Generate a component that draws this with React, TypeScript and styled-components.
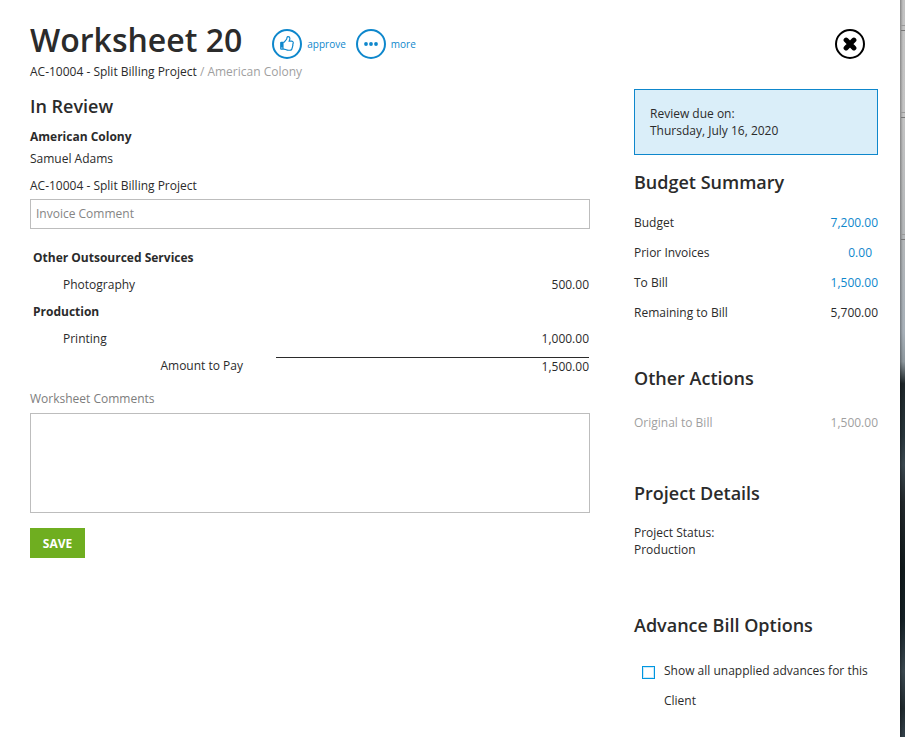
import React from 'react';
import styled, { createGlobalStyle, css } from 'styled-components';

const ink = '#2b2b2b';
const blue = '#0e87cc';
const muted = '#9f9f9f';

const GlobalStyle = createGlobalStyle`
  * { box-sizing: border-box; }
  body {
    margin: 0;
    background: #fff;
    color: ${ink};
    font: 12px/17px "Open Sans", "Noto Sans", sans-serif;
  }
  button, input, textarea { font: inherit; color: inherit; }
`;

const Screen = styled.div`
  display: grid;
  grid-template-columns: minmax(0, 1fr) 5px;
  min-height: 100vh;
`;

const Backdrop = styled.div`
  background: linear-gradient(90deg, rgba(0, 0, 0, 0.3), transparent 3px),
    linear-gradient(#c2c2c2 0, #c4c4c4 15%, #b4b7b9 32%, #a7b0b8 45%, #8d979d 49%, #1d2528 52%, #27343a 59%,
      #3a474f 63%, #22282b 68%, #10191b 77%, #142025 84%, #3a474f 91%, #1f292d 96%, #34414a);
  display: flex;
  flex-direction: column;
  align-items: flex-end;
  padding-top: 25px;
`;

const BackdropMark = styled.span<{ $gap: number }>`
  width: 4px;
  height: 6px;
  margin-bottom: ${(p) => p.$gap}px;
  border-bottom: 1px solid #777;
  border-top: 1px solid #999;
`;

const Panel = styled.div`
  padding: 21px 22px 22px 30px;
`;

const Header = styled.header`
  display: flex;
  align-items: flex-start;
  gap: 30px;
`;

const Title = styled.h1`
  margin: 0;
  font-size: 32px;
  line-height: 38px;
  font-weight: 600;
`;

const Actions = styled.div`
  display: flex;
  flex: 1;
  gap: 10px;
  padding-top: 8px;
`;

const ActionButton = styled.button`
  display: flex;
  align-items: center;
  gap: 5px;
  padding: 0;
  border: 0;
  background: none;
  color: ${blue};
  font-size: 10px;
  cursor: pointer;
`;

const Ring = styled.span`
  display: flex;
  align-items: center;
  justify-content: center;
  width: 30px;
  height: 30px;
  border: 2px solid currentColor;
  border-radius: 50%;
`;

const CloseButton = styled.button`
  margin: 8px 13px 0 0;
  padding: 0;
  border: 0;
  background: none;
  color: #000;
  cursor: pointer;
`;

const Crumbs = styled.nav`
  margin-top: 4px;
`;

const Crumb = styled.span<{ $muted?: boolean }>`
  color: ${(p) => (p.$muted ? muted : ink)};
`;

const Columns = styled.div`
  display: grid;
  grid-template-columns: minmax(0, 1fr) 244px;
  gap: 44px;
  padding-top: 9px;
`;

const Heading = styled.h2`
  margin: 0;
  font-size: 18px;
  line-height: 24px;
  font-weight: 600;
`;

const Client = styled.p<{ $strong?: boolean }>`
  margin: ${(p) => (p.$strong ? 10 : 5)}px 0 0;
  font-weight: ${(p) => (p.$strong ? 700 : 400)};
`;

const fieldBox = css`
  display: block;
  width: 100%;
  border: 1px solid #bdbdbd;
  border-radius: 0;
  background: #fff;
  padding: 0 5px;
`;

const Field = styled.label`
  display: block;
  margin-top: 10px;
`;

const CommentInput = styled.input`
  ${fieldBox}
  height: 30px;
  margin-top: 5px;
  padding-bottom: 2px;
  &::placeholder { color: #858585; opacity: 1; }
`;

const CommentArea = styled.textarea`
  ${fieldBox}
  height: 100px;
  margin-top: 6px;
  resize: none;
`;

const FieldLabel = styled.span`
  color: #7d7d7d;
`;

const Lines = styled.table`
  width: 100%;
  margin: 15px 0 11px;
  border-collapse: collapse;
`;

const GroupCell = styled.th`
  height: 27px;
  padding: 0 3px;
  text-align: left;
  font-weight: 700;
`;

const ItemCell = styled.th`
  width: 246px;
  height: 27px;
  padding: 0 0 0 33px;
  text-align: left;
  font-weight: 400;
`;

const TotalCell = styled(ItemCell)`
  padding: 0 33px 0 0;
  text-align: right;
`;

const AmountCell = styled.td<{ $total?: boolean }>`
  padding: 0 1px 0 0;
  text-align: right;
  ${(p) => p.$total && 'vertical-align: bottom;'}
`;

const TotalAmount = styled.div`
  height: 22px;
  border-top: 1px solid ${ink};
`;

const SaveButton = styled.button`
  width: 55px;
  height: 30px;
  margin-top: 15px;
  padding: 0;
  border: 0;
  background: #6fae20;
  color: #fff;
  font-weight: 700;
  cursor: pointer;
`;

const Notice = styled.div`
  padding: 15px;
  min-height: 66px;
  border: 1px solid ${blue};
  background: #daeef9;
`;

const Section = styled.section<{ $gap: number }>`
  margin-top: ${(p) => p.$gap}px;
`;

const Figures = styled.dl<{ $loose?: boolean }>`
  margin: ${(p) => (p.$loose ? 18 : 14)}px 0 0;
`;

const Figure = styled.div<{ $muted?: boolean }>`
  display: flex;
  justify-content: space-between;
  line-height: 30px;
  color: ${(p) => (p.$muted ? muted : ink)};
`;

const FigureValue = styled.dd`
  margin: 0;
`;

const ValueLink = styled.a<{ $inset?: boolean }>`
  color: ${blue};
  text-decoration: none;
  padding-right: ${(p) => (p.$inset ? 6 : 0)}px;
`;

const Status = styled.p`
  margin: 19px 0 0;
`;

const Option = styled.label`
  display: flex;
  align-items: flex-start;
  gap: 9px;
  margin-top: 19px;
  padding-left: 8px;
  line-height: 30px;
`;

const Check = styled.input`
  appearance: none;
  flex: none;
  width: 13px;
  height: 13px;
  margin: 10px 0 0;
  border: 1px solid #0096e0;
  box-shadow: inset 0 0 0 1px rgba(0, 150, 224, 0.2);
  background: #fff;
  &:checked { background: ${blue}; }
`;

const ThumbIcon = () => (
  <svg width="14" height="16" viewBox="0 0 1536 1792" fill="currentColor" aria-hidden="true">
    <path d="M256 1344q0-26-19-45t-45-19-45 19-19 45 19 45 45 19 45-19 19-45zm1152-576q0-51-39-89.5t-89-38.5h-352q0-58 48-159.5t48-160.5q0-98-32-145t-128-47q-26 26-38 85t-30.5 125.5-59.5 109.5q-22 23-77 91-4 5-23 30t-31.5 41-34.5 42.5-40 44-38.5 35.5-40 27-35.5 9h-32v640h32q13 0 31.5 3t33 6.5 38 11 35 11.5 35.5 12.5 29 10.5q211 73 342 73h121q192 0 192-167 0-26-5-56 30-16 47.5-52.5t17.5-73.5-18-69q53-50 53-119 0-25-10-55.5t-25-47.5q32-1 53.5-47t21.5-81zm128-1q0 89-49 163 9 33 9 69 0 77-38 144 3 21 3 43 0 101-60 178 1 139-85 219.5t-227 80.5h-129q-96 0-189.5-22.5t-216.5-65.5q-116-40-138-40h-288q-53 0-90.5-37.5t-37.5-90.5v-640q0-53 37.5-90.5t90.5-37.5h274q36-24 137-155 58-75 107-128 24-25 35.5-85.5t30.5-126.5 62-108q39-37 90-37 84 0 151 32.5t102 101.5 35 186q0 93-48 192h176q104 0 180 76t76 179z" />
  </svg>
);

const DotsIcon = () => (
  <svg width="14" height="4" viewBox="0 0 14 4" fill="currentColor" aria-hidden="true">
    <circle cx="2" cy="2" r="1.9" />
    <circle cx="7" cy="2" r="1.9" />
    <circle cx="12" cy="2" r="1.9" />
  </svg>
);

const CrossIcon = () => (
  <svg width="14" height="14" viewBox="0 0 14 14" aria-hidden="true">
    <path d="M3.1 3.1l7.8 7.8M10.9 3.1l-7.8 7.8" stroke="currentColor" strokeWidth="5" strokeLinecap="round" />
  </svg>
);

const figures = [
  { label: 'Budget', value: '7,200.00', link: true },
  { label: 'Prior Invoices', value: '0.00', link: true, inset: true },
  { label: 'To Bill', value: '1,500.00', link: true },
  { label: 'Remaining to Bill', value: '5,700.00' },
];

const groups = [
  { name: 'Other Outsourced Services', item: 'Photography', amount: '500.00' },
  { name: 'Production', item: 'Printing', amount: '1,000.00' },
];

export default function App() {
  return (
    <Screen>
      <GlobalStyle />
      <Panel>
        <Header>
          <Title>Worksheet 20</Title>
          <Actions>
            <ActionButton type="button"><Ring><ThumbIcon /></Ring>approve</ActionButton>
            <ActionButton type="button"><Ring><DotsIcon /></Ring>more</ActionButton>
          </Actions>
          <CloseButton type="button" aria-label="Close"><Ring><CrossIcon /></Ring></CloseButton>
        </Header>
        <Crumbs>
          <Crumb>AC-10004 - Split Billing Project</Crumb>
          <Crumb $muted> / American Colony</Crumb>
        </Crumbs>
        <Columns>
          <main>
            <Section $gap={5}>
              <Heading>In Review</Heading>
              <Client $strong>American Colony</Client>
              <Client>Samuel Adams</Client>
              <Field>
                AC-10004 - Split Billing Project
                <CommentInput placeholder="Invoice Comment" />
              </Field>
            </Section>
            <Lines>
              <tbody>
                {groups.map((g) => (
                  <React.Fragment key={g.name}>
                    <tr><GroupCell colSpan={2}>{g.name}</GroupCell></tr>
                    <tr><ItemCell scope="row">{g.item}</ItemCell><AmountCell>{g.amount}</AmountCell></tr>
                  </React.Fragment>
                ))}
                <tr>
                  <TotalCell scope="row">Amount to Pay</TotalCell>
                  <AmountCell $total><TotalAmount>1,500.00</TotalAmount></AmountCell>
                </tr>
              </tbody>
            </Lines>
            <Field>
              <FieldLabel>Worksheet Comments</FieldLabel>
              <CommentArea />
            </Field>
            <SaveButton type="button">SAVE</SaveButton>
          </main>
          <aside>
            <Notice>Review due on:<br />Thursday, July 16, 2020</Notice>
            <Section $gap={15}>
              <Heading>Budget Summary</Heading>
              <Figures>
                {figures.map((f) => (
                  <Figure key={f.label}>
                    <dt>{f.label}</dt>
                    <FigureValue>
                      {f.link ? <ValueLink href="#" $inset={f.inset}>{f.value}</ValueLink> : f.value}
                    </FigureValue>
                  </Figure>
                ))}
              </Figures>
            </Section>
            <Section $gap={38}>
              <Heading>Other Actions</Heading>
              <Figures $loose>
                <Figure $muted><dt>Original to Bill</dt><FigureValue>1,500.00</FigureValue></Figure>
              </Figures>
            </Section>
            <Section $gap={43}>
              <Heading>Project Details</Heading>
              <Status>Project Status:<br />Production</Status>
            </Section>
            <Section $gap={55}>
              <Heading>Advance Bill Options</Heading>
              <Option>
                <Check type="checkbox" />
                <span>Show all unapplied advances for this Client</span>
              </Option>
            </Section>
          </aside>
        </Columns>
      </Panel>
      <Backdrop>
        <BackdropMark $gap={81} />
        <BackdropMark $gap={116} />
        <BackdropMark $gap={0} />
      </Backdrop>
    </Screen>
  );
}
